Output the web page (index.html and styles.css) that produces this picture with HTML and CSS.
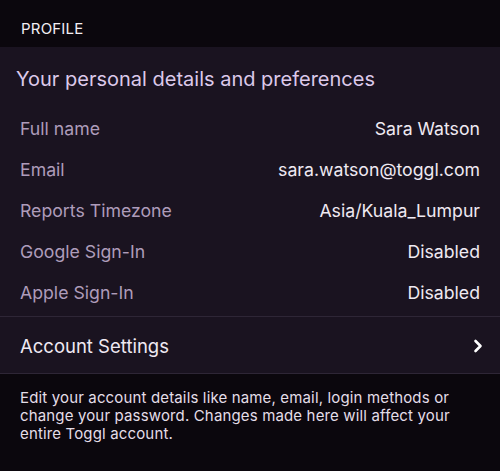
FILE: index.html
```html
<!DOCTYPE html>
<html>
<head>
<meta charset="utf-8">
<link rel="stylesheet" href="styles.css">
</head>
<body>
<div class="page">
  <div class="section-header">PROFILE</div>
  <div class="card">
    <div class="card-title">Your personal details and preferences</div>
    <div class="rows">
      <div class="row"><span class="label">Full name</span><span class="value">Sara Watson</span></div>
      <div class="row"><span class="label">Email</span><span class="value">sara.watson@toggl.com</span></div>
      <div class="row"><span class="label">Reports Timezone</span><span class="value">Asia/Kuala_Lumpur</span></div>
      <div class="row"><span class="label">Google Sign-In</span><span class="value">Disabled</span></div>
      <div class="row"><span class="label">Apple Sign-In</span><span class="value">Disabled</span></div>
    </div>
    <div class="link-row">
      <span class="link-label">Account Settings</span>
      <svg class="chevron" width="10" height="14" viewBox="0 0 10 14"><path d="M2.5 2 L7.5 7 L2.5 12" fill="none" stroke="#ffffff" stroke-width="2.6" stroke-linecap="round" stroke-linejoin="round"/></svg>
    </div>
  </div>
  <div class="footnote">Edit your account details like name, email, login methods or change your password. Changes made here will affect your entire Toggl account.</div>
</div>
</body>
</html>
```
FILE: styles.css
```css
html, body {
  margin: 0;
  padding: 0;
  background: #0b070d;
}
body {
  font-family: Inter, "Noto Sans", sans-serif;
  width: 500px;
  height: 471px;
  overflow: hidden;
}
.page {
  display: flex;
  flex-direction: column;
}
.section-header {
  height: 47px;
  box-sizing: border-box;
  padding: 20px 0 0 21px;
  font-size: 15px;
  line-height: 18px;
  color: #f2eef4;
  letter-spacing: 0.2px;
}
.card {
  background: #1a1320;
  display: flex;
  flex-direction: column;
}
.card-title {
  padding: 20px 16px 0 16px;
  height: 61px;
  box-sizing: border-box;
  font-size: 20px;
  line-height: 24px;
  color: #dcc9ea;
}
.rows {
  display: flex;
  flex-direction: column;
  padding: 0 20px 3px 20px;
  border-bottom: 1px solid #2e2636;
}
.row {
  height: 41px;
  display: flex;
  align-items: center;
  justify-content: space-between;
  font-size: 17.7px;
}
.label {
  color: #ae9cba;
}
.value {
  color: #efe9f2;
}
.link-row {
  height: 57px;
  display: flex;
  align-items: center;
  justify-content: space-between;
  padding: 2px 17px 0 20px;
  box-sizing: border-box;
  border-bottom: 1px solid #2e2636;
}
.link-label {
  font-size: 18.5px;
  color: #efe9f2;
}
.chevron {
  display: block;
}
.footnote {
  padding: 15px 20px 0 20px;
  font-size: 15px;
  line-height: 17.8px;
  color: #e4dee8;
  letter-spacing: 0.15px;
}
```
